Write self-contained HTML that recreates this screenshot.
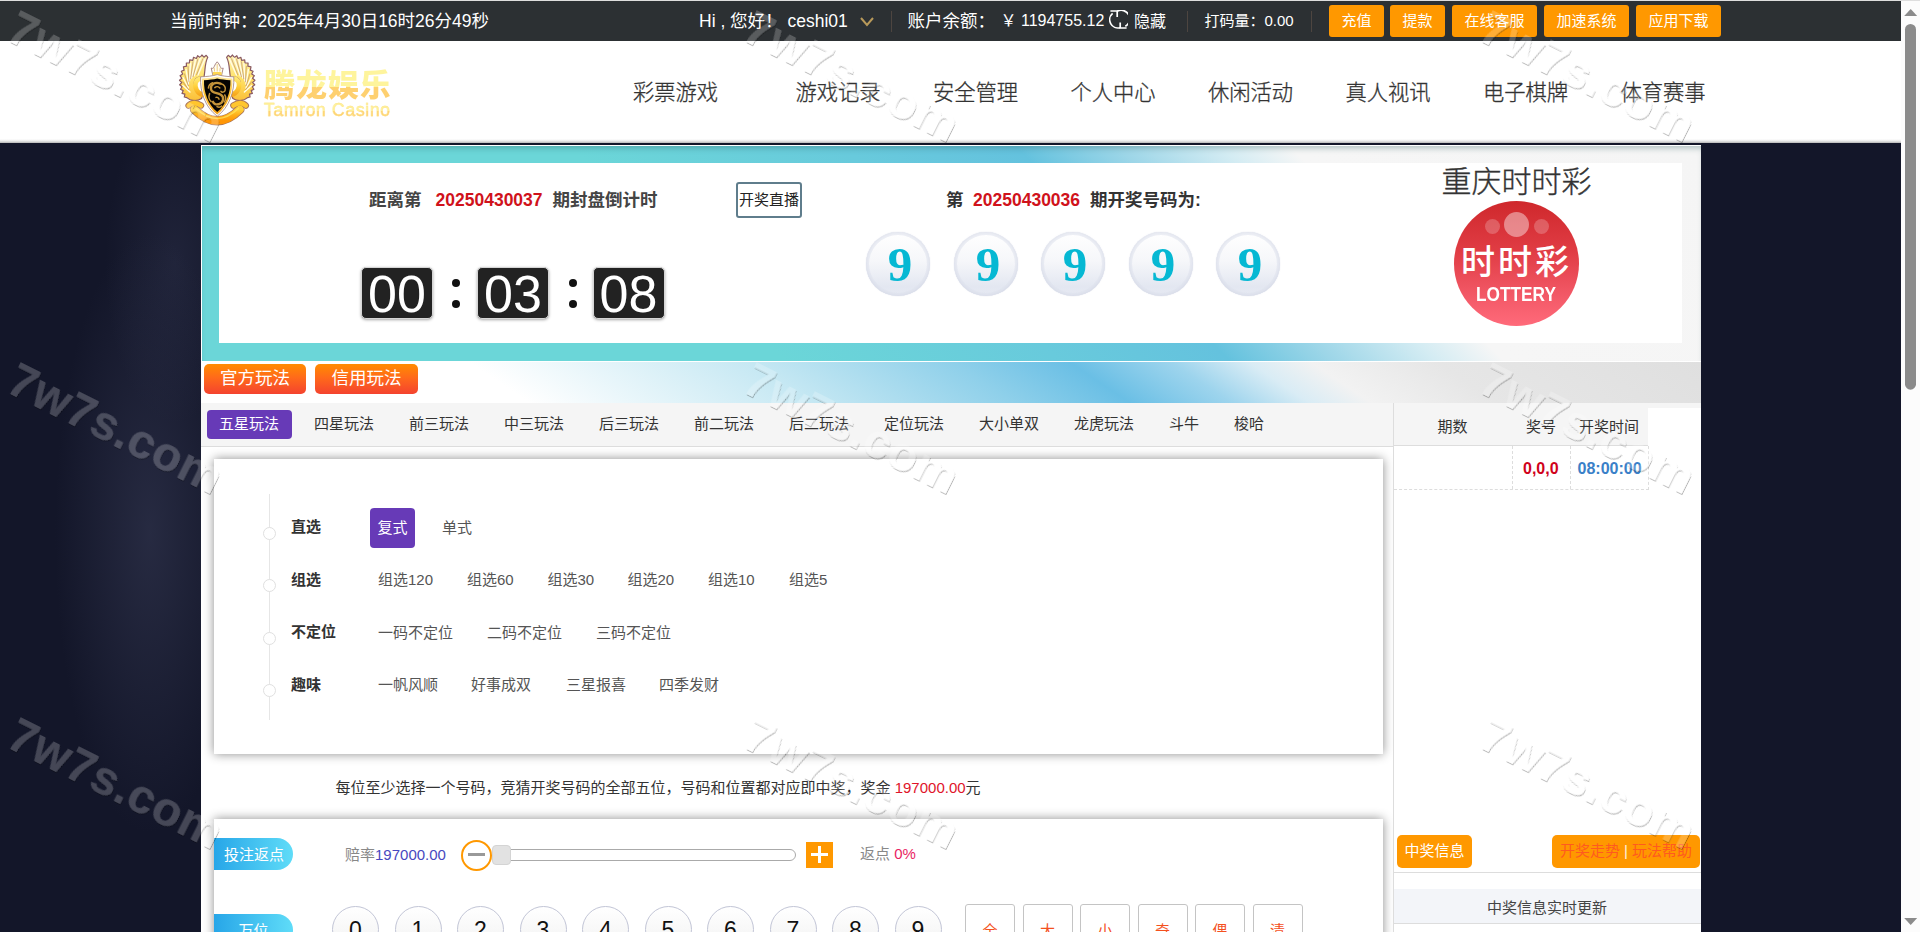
<!DOCTYPE html>
<html lang="zh-CN"><head><meta charset="utf-8"><title>重庆时时彩 - 腾龙娱乐</title>
<style>
html,body{margin:0;padding:0}
body{width:1920px;height:932px;overflow:hidden;position:relative;background:#131629;font-family:"Liberation Sans","Noto Sans CJK SC",sans-serif;}
.t{position:absolute;white-space:nowrap;}
.b{position:absolute;box-sizing:border-box;}
.ls{font-family:"Liberation Sans",sans-serif;}
.lserif{font-family:"Liberation Serif",serif;}
.wm{position:absolute;white-space:nowrap;font-family:"Liberation Sans",sans-serif;font-weight:bold;font-size:48px;color:#fff;filter:url(#wmf);letter-spacing:0.5px;transform-origin:0 0;transform:rotate(26.6deg);line-height:48px;pointer-events:none}
</style></head>
<body>
<div class="b " style="left:0px;top:143px;width:1901px;height:789px;background:radial-gradient(ellipse 95px 300px at 150px 390px, rgba(52,56,82,0.6), rgba(21,24,43,0) 100%),radial-gradient(ellipse 70px 160px at 175px 120px, rgba(48,52,78,0.45), rgba(21,24,43,0) 100%);"></div>
<div class="b " style="left:0px;top:0px;width:1901px;height:41px;background:#2c3033;"></div>
<div class="b " style="left:0px;top:0px;width:1920px;height:1px;background:#d8d8d8;"></div>
<div class="t " style="left:170px;top:6.0px;height:30px;line-height:30px;font-size:17.5px;color:#fff;font-weight:normal;">当前时钟：2025年4月30日16时26分49秒</div>
<div class="t " style="left:699px;top:6.0px;height:30px;line-height:30px;font-size:17.5px;color:#fff;font-weight:normal;">Hi , 您好！ ceshi01</div>
<svg class="b" style="left:859px;top:16px" width="16" height="12" viewBox="0 0 16 12"><path d="M2 2 L8 9 L14 2" fill="none" stroke="#b8995a" stroke-width="2"/></svg>
<div class="b " style="left:891px;top:11px;width:1px;height:21px;background:#4d4540;"></div>
<div class="b " style="left:1187px;top:11px;width:1px;height:21px;background:#4d4540;"></div>
<div class="b " style="left:1311px;top:11px;width:1px;height:21px;background:#4d4540;"></div>
<div class="t " style="left:907.5px;top:6.0px;height:30px;line-height:30px;font-size:17.5px;color:#fff;font-weight:normal;">账户余额：</div>
<div class="t " style="left:1000.5px;top:6.0px;height:30px;line-height:30px;font-size:16px;color:#fff;font-weight:normal;">￥ 1194755.12</div>
<svg class="b" style="left:1109.3px;top:9.8px" width="19" height="19" viewBox="0 0 19 19"><g fill="none" stroke="#fff" stroke-width="1.7"><path d="M1.4 1 H8.2 V7"/><path d="M17.6 18 H11.2 V12.4"/><path d="M3.6 3.4 A8.3 8.3 0 0 0 11.2 17.7"/><path d="M8.2 1.3 A8.3 8.3 0 0 1 16.3 16.3"/></g></svg>
<div class="t " style="left:1134px;top:6.5px;height:30px;line-height:30px;font-size:16px;color:#fff;font-weight:normal;">隐藏</div>
<div class="t " style="left:1204.5px;top:6.0px;height:30px;line-height:30px;font-size:15px;color:#fff;font-weight:normal;">打码量：0.00</div>
<div class="b " style="left:1329px;top:5px;width:55px;height:32px;background:#ff9800;border-radius:3px;color:#fff;font-size:15px;line-height:31px;text-align:center;">充值</div>
<div class="b " style="left:1390px;top:5px;width:55px;height:32px;background:#ff9800;border-radius:3px;color:#fff;font-size:15px;line-height:31px;text-align:center;">提款</div>
<div class="b " style="left:1452px;top:5px;width:85px;height:32px;background:#ff9800;border-radius:3px;color:#fff;font-size:15px;line-height:31px;text-align:center;">在线客服</div>
<div class="b " style="left:1544px;top:5px;width:85px;height:32px;background:#ff9800;border-radius:3px;color:#fff;font-size:15px;line-height:31px;text-align:center;">加速系统</div>
<div class="b " style="left:1636px;top:5px;width:85px;height:32px;background:#ff9800;border-radius:3px;color:#fff;font-size:15px;line-height:31px;text-align:center;">应用下载</div>
<div class="b " style="left:0px;top:41px;width:1901px;height:102px;background:linear-gradient(#fff 0,#fff 98px,#e9e9e9 100px,#b5b5b5 102px);"></div>
<svg class="b" style="left:170px;top:50px" width="100" height="80" viewBox="0 0 100 80">
<defs>
<linearGradient id="gw" x1="0" y1="0" x2="0" y2="1"><stop offset="0" stop-color="#fff2b0"/><stop offset="0.5" stop-color="#ffe36a"/><stop offset="1" stop-color="#fbbf38"/></linearGradient>
<linearGradient id="gc" x1="0" y1="0" x2="0" y2="1"><stop offset="0" stop-color="#ffe873"/><stop offset="0.5" stop-color="#ffd03a"/><stop offset="1" stop-color="#f7a81e"/></linearGradient>
<linearGradient id="gr" x1="0" y1="0" x2="0" y2="1"><stop offset="0" stop-color="#ffd23a"/><stop offset="0.5" stop-color="#ffae18"/><stop offset="1" stop-color="#ff9606"/></linearGradient>
<linearGradient id="gs" x1="0" y1="0" x2="0" y2="1"><stop offset="0" stop-color="#ffe9a0"/><stop offset="0.4" stop-color="#fcc23a"/><stop offset="1" stop-color="#f2a21a"/></linearGradient>
</defs>
<g id="wing">
<path d="M37.8 7.3 L36.2 5.3 L33.9 7.2 L31.9 5.0 L30.1 7.4 L27.6 5.7 L26.4 8.5 L23.5 7.3 L22.8 10.3 L19.7 9.8 L19.4 12.9 L16.3 13.0 L16.5 16.2 L13.4 16.9 L14.1 20.1 L11.3 21.3 L12.7 24.1 L10.0 25.7 L11.9 28.3 L9.5 30.3 L11.7 32.5 L9.6 34.8 L12.1 36.7 L10.5 39.2 L13.2 40.6 L12.0 43.4 L14.9 44.1 L14.3 47.0 L16.8 47.6 C20.5 51 27 51.6 31.5 48.5 L33.2 44 C27 43 22.8 36.5 24.6 31 C26 27 30 26.4 33.8 27.8 C35.4 21.5 34.4 13.5 37.8 7.3 Z" fill="url(#gw)" stroke="#8a5a62" stroke-width="1.2" stroke-linejoin="round"/>
<path d="M35 9 L28 25 M30.5 8 L24 26 M25.5 9.8 L21.5 28 M20.5 13.5 L19.5 31 M16 19.5 L18.5 34 M13 27.5 L18.5 38 M12.8 35.5 L20 42" fill="none" stroke="#fffce6" stroke-width="1.4" stroke-linecap="round"/>
<path d="M33 8.4 L26.5 25 M28 8.6 L23 27 M23 11.4 L20.6 29 M18 16 L19 32 M14.4 23.5 L18.4 36 M12.6 31.5 L19 40" fill="none" stroke="#a06a66" stroke-opacity="0.7" stroke-width="0.7"/>
<path d="M33.6 29.4 C30.5 27.6 26.6 29 25.6 33 C24.4 38 27.6 43.4 32.4 44.6" fill="none" stroke="url(#gc)" stroke-width="4.6" stroke-linecap="round"/>
</g>
<use href="#wing" transform="translate(94.4,0) scale(-1,1)"/>
<path d="M42.8 25.2 L41.2 18 C42.6 19 43.8 18 44.2 16.6 C44.8 14.6 46 13.2 47.2 11.8 C48.4 13.2 49.6 14.6 50.2 16.6 C50.6 18 51.8 19 53.2 18 L51.6 25.2 Z" fill="#fffdf2" stroke="#a07a7a" stroke-width="0.9" stroke-linejoin="round"/>
<path d="M43 22 L51.4 22 L51.7 25 L42.7 25 Z" fill="#ffd650"/>
<path d="M44.6 21.5 L44.2 17.8 M47.2 21.5 L47.2 14 M49.8 21.5 L50.2 17.8" stroke="#e8c26a" stroke-width="0.8" fill="none"/>
<g fill="none" stroke-linecap="round">
<path d="M24.5 59.5 Q47.2 82 69.9 59.5" stroke="#a8745a" stroke-width="9.4"/>
<path d="M18.6 55.6 Q23.5 50.6 31 55.5" stroke="#a8745a" stroke-width="6.4"/>
<path d="M75.8 55.6 Q70.9 50.6 63.4 55.5" stroke="#a8745a" stroke-width="6.4"/>
<path d="M24.5 59.5 Q47.2 82 69.9 59.5" stroke="url(#gr)" stroke-width="7.6"/>
<path d="M18.6 55.6 Q23.5 50.6 31 55.5" stroke="#ffc62e" stroke-width="4.6"/>
<path d="M75.8 55.6 Q70.9 50.6 63.4 55.5" stroke="#ffc62e" stroke-width="4.6"/>
<path d="M26 58.5 Q47.2 78.5 68.4 58.5" stroke="#ffe25a" stroke-width="1.6" stroke-opacity="0.8"/>
</g>
<path d="M30.6 26.8 C37 26.6 42.6 26 47.2 24.6 C51.8 26 57.4 26.6 63.8 26.8 C64.6 42 59 57.5 47.2 66.2 C35.4 57.5 29.8 42 30.6 26.8 Z" fill="#fff" stroke="#a08078" stroke-width="0.8"/>
<path d="M32 28.6 C38 28.4 43 27.8 47.2 26.6 C51.4 27.8 56.4 28.4 62.4 28.6 C63 42.4 57.8 56.4 47.2 64.6 C36.6 56.4 31.4 42.4 32 28.6 Z" fill="url(#gs)"/>
<path d="M34 30.2 C39 30 43.4 29.6 47.2 28.6 C51 29.6 55.4 30 60.4 30.2 C60.8 42 56.4 54.4 47.2 62 C38 54.4 33.6 42 34 30.2 Z" fill="#050403"/>
<g fill="none" stroke="#c4943a" stroke-linecap="round">
<path d="M50.5 33.6 C45 31.4 40.2 34.6 41 39.2 C41.8 43.4 47.4 42.6 50.8 44.8 C54.6 47.2 53.6 52.4 49.2 54 C46.2 55 43.6 53.8 43 51.8" stroke-width="2.4"/>
<path d="M51 33.8 C54.4 34.6 56.2 37.6 55 40.6 C54.2 42.4 52 42.6 51 41.4 M39.6 43.6 C38.4 46.6 39.2 49.8 41.2 51.6 M44.8 37.6 C46.2 36.4 48.6 36.6 49.8 38 M46 47.4 C47.4 47 48.8 47.8 49 49.2 M54.8 45 C56 47 55.8 50 54.4 52 M42.6 32.8 C40.4 33.6 38.6 35.6 38.4 38 M47 56.6 C48.4 57.4 50.4 57.2 51.6 56" stroke-width="1.5"/>
</g>
</svg>
<div class="t " style="left:264px;top:66.0px;height:40px;line-height:40px;font-size:31px;color:#fdc04a;font-weight:900;letter-spacing:0.9px;background:linear-gradient(#fef49c 0,#fef49c 52%,#fed06f 52%,#fed06f 100%);-webkit-background-clip:text;background-clip:text;color:transparent;">腾龙娱乐</div>
<div class="t " style="left:264px;top:99.6px;height:20px;line-height:20px;font-size:17.5px;color:#fed06f;font-weight:normal;letter-spacing:0.7px;-webkit-text-stroke:0.35px #fee487;background:linear-gradient(#fef49c 0,#fef49c 55%,#fed06f 55%,#fed06f 100%);-webkit-background-clip:text;background-clip:text;color:transparent;">Tamron Casino</div>
<div class="t " style="left:633px;top:78.0px;height:30px;line-height:30px;font-size:21.25px;color:#333;font-weight:300;-webkit-text-stroke:0.3px #333;">彩票游戏</div>
<div class="t " style="left:795.5px;top:78.0px;height:30px;line-height:30px;font-size:21.25px;color:#333;font-weight:300;-webkit-text-stroke:0.3px #333;">游戏记录</div>
<div class="t " style="left:933px;top:78.0px;height:30px;line-height:30px;font-size:21.25px;color:#333;font-weight:300;-webkit-text-stroke:0.3px #333;">安全管理</div>
<div class="t " style="left:1070.5px;top:78.0px;height:30px;line-height:30px;font-size:21.25px;color:#333;font-weight:300;-webkit-text-stroke:0.3px #333;">个人中心</div>
<div class="t " style="left:1208px;top:78.0px;height:30px;line-height:30px;font-size:21.25px;color:#333;font-weight:300;-webkit-text-stroke:0.3px #333;">休闲活动</div>
<div class="t " style="left:1345.5px;top:78.0px;height:30px;line-height:30px;font-size:21.25px;color:#333;font-weight:300;-webkit-text-stroke:0.3px #333;">真人视讯</div>
<div class="t " style="left:1483px;top:78.0px;height:30px;line-height:30px;font-size:21.25px;color:#333;font-weight:300;-webkit-text-stroke:0.3px #333;">电子棋牌</div>
<div class="t " style="left:1620.5px;top:78.0px;height:30px;line-height:30px;font-size:21.25px;color:#333;font-weight:300;-webkit-text-stroke:0.3px #333;">体育赛事</div>
<div class="b " style="left:201px;top:145px;width:1500px;height:800px;background:#fff;"></div>
<div class="b " style="left:202px;top:146px;width:1499px;height:216px;box-shadow:inset 0 5px 6px -3px rgba(40,90,90,0.35);background:linear-gradient(45deg,#6bd6d8 0%,#6bd6d8 34%,#68cadc 50%,#64c2de 60%,#9dd6e8 66%,#d4ecf3 72%,#f6f6f6 76%,#f5f5f5 100%);"></div>
<div class="b " style="left:202px;top:361px;width:1499px;height:42px;background:linear-gradient(34deg,#fff 0%,#fff 21%,#c6e8f3 39%,#8fd0ea 52%,#6abfe5 59.5%,#9dd4ed 66%,#d9ecf5 71%,#f2f2f2 75%,#e6e6e6 83%,#dfdfdf 100%);border-top:1px solid #fff;"></div>
<div class="b " style="left:219px;top:163px;width:1463px;height:180px;background:#fff;"></div>
<div class="t " style="left:369px;top:185.0px;height:30px;line-height:30px;font-size:17.5px;color:#444;font-weight:bold;">距离第</div>
<div class="t " style="left:435.5px;top:185.0px;height:30px;line-height:30px;font-size:17.5px;color:#d0121b;font-weight:bold;">20250430037</div>
<div class="t " style="left:552.5px;top:185.0px;height:30px;line-height:30px;font-size:17.5px;color:#444;font-weight:bold;">期封盘倒计时</div>
<div class="b " style="left:736px;top:182px;width:66px;height:36px;border:2px solid #5f7d8c;border-radius:3px;background:#fff;"></div>
<div class="t" style="left:669.0px;width:200px;text-align:center;top:185.0px;height:30px;line-height:30px;font-size:15px;color:#222;font-weight:normal;">开奖直播</div>
<div class="b ls" style="left:361px;top:267px;width:72px;height:52px;background:#222;border:1px solid #d5d5d5;border-radius:5px;box-shadow:0 1px 3px rgba(0,0,0,0.35);color:#fff;font-size:52px;line-height:53px;text-align:center;">00</div>
<div class="b ls" style="left:477px;top:267px;width:72px;height:52px;background:#222;border:1px solid #d5d5d5;border-radius:5px;box-shadow:0 1px 3px rgba(0,0,0,0.35);color:#fff;font-size:52px;line-height:53px;text-align:center;">03</div>
<div class="b ls" style="left:592.5px;top:267px;width:72px;height:52px;background:#222;border:1px solid #d5d5d5;border-radius:5px;box-shadow:0 1px 3px rgba(0,0,0,0.35);color:#fff;font-size:52px;line-height:53px;text-align:center;">08</div>
<div class="b " style="left:452px;top:279px;width:8px;height:8px;background:#111;border-radius:50%;"></div>
<div class="b " style="left:452px;top:300px;width:8px;height:8px;background:#111;border-radius:50%;"></div>
<div class="b " style="left:568.5px;top:279px;width:8px;height:8px;background:#111;border-radius:50%;"></div>
<div class="b " style="left:568.5px;top:300px;width:8px;height:8px;background:#111;border-radius:50%;"></div>
<div class="t " style="left:946px;top:185.0px;height:30px;line-height:30px;font-size:17.5px;color:#333;font-weight:bold;">第</div>
<div class="t " style="left:973px;top:185.0px;height:30px;line-height:30px;font-size:17.5px;color:#d0121b;font-weight:bold;">20250430036</div>
<div class="t " style="left:1090px;top:185.0px;height:30px;line-height:30px;font-size:17.5px;color:#333;font-weight:bold;">期开奖号码为:</div>
<div class="b lserif" style="left:866px;top:232px;width:64px;height:64px;border-radius:50%;background:linear-gradient(#ffffff 0%,#f6f7fa 45%,#e3e7f1 85%,#e6e9f2 100%);box-shadow:inset 0 0 0 3px rgba(222,226,236,0.55),inset 0 0 3px rgba(150,160,190,0.45),0 0 1px rgba(160,170,200,0.6);color:#06b8d3;font-weight:bold;font-size:49px;line-height:65px;text-align:center;padding-left:4px;">9</div>
<div class="b lserif" style="left:954px;top:232px;width:64px;height:64px;border-radius:50%;background:linear-gradient(#ffffff 0%,#f6f7fa 45%,#e3e7f1 85%,#e6e9f2 100%);box-shadow:inset 0 0 0 3px rgba(222,226,236,0.55),inset 0 0 3px rgba(150,160,190,0.45),0 0 1px rgba(160,170,200,0.6);color:#06b8d3;font-weight:bold;font-size:49px;line-height:65px;text-align:center;padding-left:4px;">9</div>
<div class="b lserif" style="left:1041px;top:232px;width:64px;height:64px;border-radius:50%;background:linear-gradient(#ffffff 0%,#f6f7fa 45%,#e3e7f1 85%,#e6e9f2 100%);box-shadow:inset 0 0 0 3px rgba(222,226,236,0.55),inset 0 0 3px rgba(150,160,190,0.45),0 0 1px rgba(160,170,200,0.6);color:#06b8d3;font-weight:bold;font-size:49px;line-height:65px;text-align:center;padding-left:4px;">9</div>
<div class="b lserif" style="left:1129px;top:232px;width:64px;height:64px;border-radius:50%;background:linear-gradient(#ffffff 0%,#f6f7fa 45%,#e3e7f1 85%,#e6e9f2 100%);box-shadow:inset 0 0 0 3px rgba(222,226,236,0.55),inset 0 0 3px rgba(150,160,190,0.45),0 0 1px rgba(160,170,200,0.6);color:#06b8d3;font-weight:bold;font-size:49px;line-height:65px;text-align:center;padding-left:4px;">9</div>
<div class="b lserif" style="left:1216px;top:232px;width:64px;height:64px;border-radius:50%;background:linear-gradient(#ffffff 0%,#f6f7fa 45%,#e3e7f1 85%,#e6e9f2 100%);box-shadow:inset 0 0 0 3px rgba(222,226,236,0.55),inset 0 0 3px rgba(150,160,190,0.45),0 0 1px rgba(160,170,200,0.6);color:#06b8d3;font-weight:bold;font-size:49px;line-height:65px;text-align:center;padding-left:4px;">9</div>
<div class="t" style="left:1366.5px;width:300px;text-align:center;top:161.5px;height:40px;line-height:40px;font-size:30px;color:#333;font-weight:300;-webkit-text-stroke:0.35px #333;">重庆时时彩</div>
<div class="b " style="left:1454px;top:201px;width:125px;height:125px;border-radius:50%;background:linear-gradient(#cf282c 0%,#e03c44 40%,#f25866 75%,#ff6a7a 100%);"></div>
<div class="b " style="left:1504px;top:212px;width:25px;height:25px;border-radius:50%;background:rgba(255,255,255,0.42);"></div>
<div class="b " style="left:1484.5px;top:218.5px;width:15px;height:15px;border-radius:50%;background:rgba(255,255,255,0.22);"></div>
<div class="b " style="left:1534px;top:218.5px;width:15px;height:15px;border-radius:50%;background:rgba(255,255,255,0.22);"></div>
<div class="t" style="left:1446.5px;width:140px;text-align:center;top:242.0px;height:40px;line-height:40px;font-size:34px;color:#fff;font-weight:500;letter-spacing:3px;">时时彩</div>
<div class="t" style="left:1451.0px;width:130px;text-align:center;top:283.0px;height:22px;line-height:22px;font-size:19.5px;color:#fff;font-weight:bold;transform:scaleX(0.885);">LOTTERY</div>
<div class="b " style="left:204px;top:364px;width:102px;height:30px;border-radius:5px;background:linear-gradient(#ff8c00 0%,#ff6a1a 45%,#f4432f 100%);color:#fff;font-size:17.5px;line-height:29px;text-align:center;">官方玩法</div>
<div class="b " style="left:315px;top:364px;width:103px;height:30px;border-radius:5px;background:linear-gradient(#ff8c00 0%,#ff6a1a 45%,#f4432f 100%);color:#fff;font-size:17.5px;line-height:29px;text-align:center;">信用玩法</div>
<div class="b " style="left:201px;top:403px;width:1192px;height:44px;background:#f5f5f5;border-bottom:1px solid #ddd;"></div>
<div class="b " style="left:207px;top:410px;width:85px;height:29px;background:#673ab7;border-radius:4px;"></div>
<div class="t " style="left:219px;top:409.0px;height:30px;line-height:30px;font-size:15px;color:#fff;font-weight:normal;">五星玩法</div>
<div class="t " style="left:314px;top:409.0px;height:30px;line-height:30px;font-size:15px;color:#333;font-weight:normal;">四星玩法</div>
<div class="t " style="left:409px;top:409.0px;height:30px;line-height:30px;font-size:15px;color:#333;font-weight:normal;">前三玩法</div>
<div class="t " style="left:504px;top:409.0px;height:30px;line-height:30px;font-size:15px;color:#333;font-weight:normal;">中三玩法</div>
<div class="t " style="left:599px;top:409.0px;height:30px;line-height:30px;font-size:15px;color:#333;font-weight:normal;">后三玩法</div>
<div class="t " style="left:694px;top:409.0px;height:30px;line-height:30px;font-size:15px;color:#333;font-weight:normal;">前二玩法</div>
<div class="t " style="left:789px;top:409.0px;height:30px;line-height:30px;font-size:15px;color:#333;font-weight:normal;">后二玩法</div>
<div class="t " style="left:884px;top:409.0px;height:30px;line-height:30px;font-size:15px;color:#333;font-weight:normal;">定位玩法</div>
<div class="t " style="left:979px;top:409.0px;height:30px;line-height:30px;font-size:15px;color:#333;font-weight:normal;">大小单双</div>
<div class="t " style="left:1074px;top:409.0px;height:30px;line-height:30px;font-size:15px;color:#333;font-weight:normal;">龙虎玩法</div>
<div class="t " style="left:1169px;top:409.0px;height:30px;line-height:30px;font-size:15px;color:#333;font-weight:normal;">斗牛</div>
<div class="t " style="left:1234px;top:409.0px;height:30px;line-height:30px;font-size:15px;color:#333;font-weight:normal;">梭哈</div>
<div class="b " style="left:202px;top:447px;width:1191px;height:500px;background:#fff;"></div>
<div class="b " style="left:214px;top:459px;width:1169px;height:295px;background:#fff;box-shadow:0 0 10px rgba(0,0,0,0.45);"></div>
<div class="b " style="left:269px;top:494px;width:1px;height:226px;background:#e6e6e6;"></div>
<div class="b " style="left:263px;top:526.5px;width:13px;height:13px;border:1px solid #e0e0e0;border-radius:50%;background:#fff;"></div>
<div class="t " style="left:291px;top:512.0px;height:30px;line-height:30px;font-size:15px;color:#333;font-weight:bold;">直选</div>
<div class="b " style="left:263px;top:579.0px;width:13px;height:13px;border:1px solid #e0e0e0;border-radius:50%;background:#fff;"></div>
<div class="t " style="left:291px;top:564.5px;height:30px;line-height:30px;font-size:15px;color:#333;font-weight:bold;">组选</div>
<div class="b " style="left:263px;top:631.5px;width:13px;height:13px;border:1px solid #e0e0e0;border-radius:50%;background:#fff;"></div>
<div class="t " style="left:291px;top:617.0px;height:30px;line-height:30px;font-size:15px;color:#333;font-weight:bold;">不定位</div>
<div class="b " style="left:263px;top:684.0px;width:13px;height:13px;border:1px solid #e0e0e0;border-radius:50%;background:#fff;"></div>
<div class="t " style="left:291px;top:669.5px;height:30px;line-height:30px;font-size:15px;color:#333;font-weight:bold;">趣味</div>
<div class="b " style="left:370px;top:508px;width:45px;height:39.5px;background:#673ab7;border-radius:4px;"></div>
<div class="t " style="left:377.5px;top:512.5px;height:30px;line-height:30px;font-size:15px;color:#fff;font-weight:normal;">复式</div>
<div class="t " style="left:442px;top:512.5px;height:30px;line-height:30px;font-size:15px;color:#555;font-weight:normal;">单式</div>
<div class="t " style="left:378px;top:565.0px;height:30px;line-height:30px;font-size:15px;color:#555;font-weight:normal;">组选120</div>
<div class="t " style="left:467px;top:565.0px;height:30px;line-height:30px;font-size:15px;color:#555;font-weight:normal;">组选60</div>
<div class="t " style="left:547.5px;top:565.0px;height:30px;line-height:30px;font-size:15px;color:#555;font-weight:normal;">组选30</div>
<div class="t " style="left:627.5px;top:565.0px;height:30px;line-height:30px;font-size:15px;color:#555;font-weight:normal;">组选20</div>
<div class="t " style="left:708px;top:565.0px;height:30px;line-height:30px;font-size:15px;color:#555;font-weight:normal;">组选10</div>
<div class="t " style="left:789px;top:565.0px;height:30px;line-height:30px;font-size:15px;color:#555;font-weight:normal;">组选5</div>
<div class="t " style="left:378px;top:618.0px;height:30px;line-height:30px;font-size:15px;color:#555;font-weight:normal;">一码不定位</div>
<div class="t " style="left:487px;top:618.0px;height:30px;line-height:30px;font-size:15px;color:#555;font-weight:normal;">二码不定位</div>
<div class="t " style="left:596px;top:618.0px;height:30px;line-height:30px;font-size:15px;color:#555;font-weight:normal;">三码不定位</div>
<div class="t " style="left:378px;top:670.0px;height:30px;line-height:30px;font-size:15px;color:#555;font-weight:normal;">一帆风顺</div>
<div class="t " style="left:471px;top:670.0px;height:30px;line-height:30px;font-size:15px;color:#555;font-weight:normal;">好事成双</div>
<div class="t " style="left:566px;top:670.0px;height:30px;line-height:30px;font-size:15px;color:#555;font-weight:normal;">三星报喜</div>
<div class="t " style="left:659px;top:670.0px;height:30px;line-height:30px;font-size:15px;color:#555;font-weight:normal;">四季发财</div>
<div class="t " style="left:335.5px;top:772.5px;height:30px;line-height:30px;font-size:15px;color:#333;font-weight:normal;">每位至少选择一个号码，竞猜开奖号码的全部五位，号码和位置都对应即中奖，奖金 <span style="color:#e0142a">197000.00</span>元</div>
<div class="b " style="left:214px;top:819px;width:1169px;height:130px;background:#fff;box-shadow:0 0 10px rgba(0,0,0,0.45);"></div>
<div class="b " style="left:214px;top:838px;width:79px;height:32px;background:linear-gradient(90deg,#27a6e8,#5fdcf8);border-radius:0 16px 16px 0;"></div>
<div class="t " style="left:224px;top:839.5px;height:30px;line-height:30px;font-size:15px;color:#fff;font-weight:normal;">投注返点</div>
<div class="t " style="left:345px;top:839.5px;height:30px;line-height:30px;font-size:15px;color:#888;font-weight:normal;">赔率<span style="color:#4848c0">197000.00</span></div>
<div class="b " style="left:461px;top:839.5px;width:31px;height:31px;border:2px solid #ff9800;border-radius:50%;background:#fff;"></div>
<div class="b " style="left:467.5px;top:853px;width:17px;height:3px;background:#999;"></div>
<div class="b " style="left:492px;top:849px;width:304px;height:12px;border:1px solid #aaa;border-radius:6px;background:#fff;"></div>
<div class="b " style="left:492px;top:845px;width:19px;height:20px;border:1px solid #d4d4d4;border-radius:4px;background:#e2e2e2;"></div>
<div class="b " style="left:806px;top:842px;width:27px;height:25.7px;background:#ff9800;"></div>
<div class="b " style="left:811px;top:853.4px;width:17px;height:2.6px;background:#fff;"></div>
<div class="b " style="left:818.2px;top:846.2px;width:2.6px;height:17px;background:#fff;"></div>
<div class="t " style="left:860px;top:839.0px;height:30px;line-height:30px;font-size:15px;color:#888;font-weight:normal;">返点 <span style="color:#e91e63">0%</span></div>
<div class="b " style="left:214px;top:914px;width:79px;height:32px;background:linear-gradient(90deg,#27a6e8,#5fdcf8);border-radius:0 16px 16px 0;"></div>
<div class="t " style="left:238.5px;top:915.5px;height:30px;line-height:30px;font-size:15px;color:#fff;font-weight:normal;">万位</div>
<div class="b ls" style="left:332.0px;top:906px;width:47px;height:47px;border:1px solid #c2c5d6;border-radius:50%;background:linear-gradient(#fff,#f1f1f1);color:#111;font-size:23px;line-height:46px;text-align:center;">0</div>
<div class="b ls" style="left:394.5px;top:906px;width:47px;height:47px;border:1px solid #c2c5d6;border-radius:50%;background:linear-gradient(#fff,#f1f1f1);color:#111;font-size:23px;line-height:46px;text-align:center;">1</div>
<div class="b ls" style="left:457.0px;top:906px;width:47px;height:47px;border:1px solid #c2c5d6;border-radius:50%;background:linear-gradient(#fff,#f1f1f1);color:#111;font-size:23px;line-height:46px;text-align:center;">2</div>
<div class="b ls" style="left:519.5px;top:906px;width:47px;height:47px;border:1px solid #c2c5d6;border-radius:50%;background:linear-gradient(#fff,#f1f1f1);color:#111;font-size:23px;line-height:46px;text-align:center;">3</div>
<div class="b ls" style="left:582.0px;top:906px;width:47px;height:47px;border:1px solid #c2c5d6;border-radius:50%;background:linear-gradient(#fff,#f1f1f1);color:#111;font-size:23px;line-height:46px;text-align:center;">4</div>
<div class="b ls" style="left:644.5px;top:906px;width:47px;height:47px;border:1px solid #c2c5d6;border-radius:50%;background:linear-gradient(#fff,#f1f1f1);color:#111;font-size:23px;line-height:46px;text-align:center;">5</div>
<div class="b ls" style="left:707.0px;top:906px;width:47px;height:47px;border:1px solid #c2c5d6;border-radius:50%;background:linear-gradient(#fff,#f1f1f1);color:#111;font-size:23px;line-height:46px;text-align:center;">6</div>
<div class="b ls" style="left:769.5px;top:906px;width:47px;height:47px;border:1px solid #c2c5d6;border-radius:50%;background:linear-gradient(#fff,#f1f1f1);color:#111;font-size:23px;line-height:46px;text-align:center;">7</div>
<div class="b ls" style="left:832.0px;top:906px;width:47px;height:47px;border:1px solid #c2c5d6;border-radius:50%;background:linear-gradient(#fff,#f1f1f1);color:#111;font-size:23px;line-height:46px;text-align:center;">8</div>
<div class="b ls" style="left:894.5px;top:906px;width:47px;height:47px;border:1px solid #c2c5d6;border-radius:50%;background:linear-gradient(#fff,#f1f1f1);color:#111;font-size:23px;line-height:46px;text-align:center;">9</div>
<div class="b " style="left:965.0px;top:903.5px;width:50px;height:40px;border:1px solid #c4c4c4;border-radius:3px;background:#fff;color:#f4511e;font-size:15px;line-height:52px;text-align:center;">全</div>
<div class="b " style="left:1022.5px;top:903.5px;width:50px;height:40px;border:1px solid #c4c4c4;border-radius:3px;background:#fff;color:#f4511e;font-size:15px;line-height:52px;text-align:center;">大</div>
<div class="b " style="left:1080.0px;top:903.5px;width:50px;height:40px;border:1px solid #c4c4c4;border-radius:3px;background:#fff;color:#f4511e;font-size:15px;line-height:52px;text-align:center;">小</div>
<div class="b " style="left:1137.5px;top:903.5px;width:50px;height:40px;border:1px solid #c4c4c4;border-radius:3px;background:#fff;color:#f4511e;font-size:15px;line-height:52px;text-align:center;">奇</div>
<div class="b " style="left:1195.0px;top:903.5px;width:50px;height:40px;border:1px solid #c4c4c4;border-radius:3px;background:#fff;color:#f4511e;font-size:15px;line-height:52px;text-align:center;">偶</div>
<div class="b " style="left:1252.5px;top:903.5px;width:50px;height:40px;border:1px solid #c4c4c4;border-radius:3px;background:#fff;color:#f4511e;font-size:15px;line-height:52px;text-align:center;">清</div>
<div class="b " style="left:1393px;top:403px;width:308px;height:540px;background:#fff;border-left:1px solid #ddd;"></div>
<div class="b " style="left:1394px;top:403px;width:307px;height:5px;background:#f5f5f5;"></div>
<div class="b " style="left:1394px;top:403px;width:254px;height:43px;background:#f5f5f5;border-bottom:1px solid #ddd;"></div>
<div class="t " style="left:1437.5px;top:412.0px;height:30px;line-height:30px;font-size:15px;color:#333;font-weight:normal;">期数</div>
<div class="t " style="left:1526px;top:412.0px;height:30px;line-height:30px;font-size:15px;color:#333;font-weight:normal;">奖号</div>
<div class="t " style="left:1579px;top:412.0px;height:30px;line-height:30px;font-size:15px;color:#333;font-weight:normal;">开奖时间</div>
<div class="b " style="left:1394px;top:446px;width:255px;height:44px;border-bottom:1px dashed #ddd;border-right:1px dashed #ddd;"></div>
<div class="b " style="left:1512px;top:446px;width:1px;height:43px;border-left:1px dashed #ddd;"></div>
<div class="b " style="left:1570px;top:446px;width:1px;height:43px;border-left:1px dashed #ddd;"></div>
<div class="t " style="left:1523px;top:453.5px;height:30px;line-height:30px;font-size:16px;color:#d0021b;font-weight:bold;">0,0,0</div>
<div class="t " style="left:1577.5px;top:453.5px;height:30px;line-height:30px;font-size:16px;color:#3a80c8;font-weight:bold;">08:00:00</div>
<div class="b " style="left:1397px;top:835px;width:75px;height:33px;background:#ff9800;border-radius:5px;color:#fff;font-size:15px;line-height:32px;text-align:center;">中奖信息</div>
<div class="b " style="left:1552px;top:835px;width:148px;height:33px;background:#ff9800;border-radius:5px;color:#ff5a1f;font-size:15px;line-height:32px;text-align:center;">开奖走势 <span style="color:#fff3e0">|</span> 玩法帮助</div>
<div class="b " style="left:1394px;top:872px;width:307px;height:1px;background:#ddd;"></div>
<div class="b " style="left:1394px;top:889px;width:307px;height:35px;background:#f3f5f9;border-bottom:1px solid #ddd;"></div>
<div class="t" style="left:1447.0px;width:200px;text-align:center;top:892.5px;height:30px;line-height:30px;font-size:15px;color:#444;font-weight:normal;">中奖信息实时更新</div>
<svg width="0" height="0" style="position:absolute"><defs><filter id="wmf" x="-5%" y="-20%" width="110%" height="140%"><feOffset in="SourceAlpha" dx="1.3" dy="1.3" result="o"/><feGaussianBlur in="o" stdDeviation="0.45" result="ob"/><feComposite in="ob" in2="SourceAlpha" operator="out" result="sh"/><feFlood flood-color="#000" flood-opacity="0.3"/><feComposite in2="sh" operator="in" result="shadow"/><feFlood flood-color="#fff" flood-opacity="0.21"/><feComposite in2="SourceAlpha" operator="in" result="fill"/><feMerge><feMergeNode in="shadow"/><feMergeNode in="fill"/></feMerge></filter></defs></svg>
<div class="wm" style="left:22px;top:3px">7w7s.com</div>
<div class="wm" style="left:22px;top:355px">7w7s.com</div>
<div class="wm" style="left:22px;top:710px">7w7s.com</div>
<div class="wm" style="left:758px;top:3px">7w7s.com</div>
<div class="wm" style="left:758px;top:355px">7w7s.com</div>
<div class="wm" style="left:758px;top:710px">7w7s.com</div>
<div class="wm" style="left:1494px;top:3px">7w7s.com</div>
<div class="wm" style="left:1494px;top:355px">7w7s.com</div>
<div class="wm" style="left:1494px;top:710px">7w7s.com</div>
<div class="b " style="left:1901px;top:0px;width:19px;height:932px;background:#fcfcfc;"></div>
<svg class="b" style="left:1901px;top:0" width="19" height="932"><path d="M3.2 16 L9.7 9 L16.2 16 Z" fill="#8b8b8b"/><rect x="4" y="24" width="11" height="365.7" rx="5.5" fill="#8b8b8b"/><path d="M3.2 918 L9.7 925 L16.2 918 Z" fill="#8b8b8b"/></svg>
<div class="b " style="left:0px;top:0px;width:1920px;height:1px;background:#dedede;"></div>
</body></html>
